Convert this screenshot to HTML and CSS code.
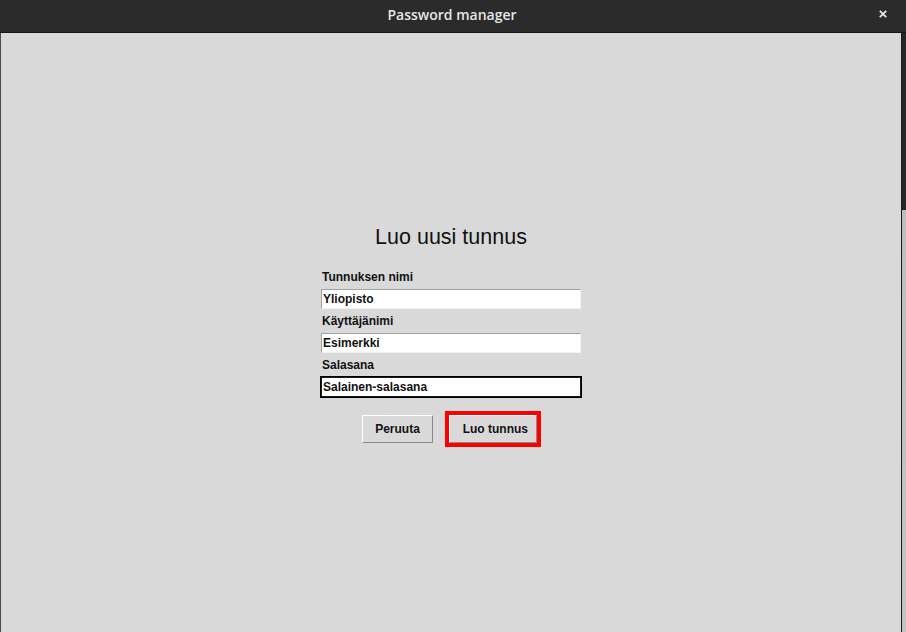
FILE: index.html
```html
<!DOCTYPE html>
<html lang="fi">
<head>
<meta charset="utf-8">
<title>Password manager</title>
<link rel="stylesheet" href="styles.css">
</head>
<body>
<div class="window">
  <header class="titlebar">
    <span class="title">Password manager</span>
    <span class="close" aria-label="Sulje">
      <svg width="8" height="8" viewBox="0 0 8 8"><path d="M0.8 0.8 L7.2 7.2 M7.2 0.8 L0.8 7.2" stroke="#e4e4e4" stroke-width="1.9" fill="none"/></svg>
    </span>
  </header>
  <div class="main">
    <div class="content">
      <div class="form">
        <h1 class="heading">Luo uusi tunnus</h1>
        <label class="label">Tunnuksen nimi</label>
        <div class="entry"><div class="entry-inner">Yliopisto</div></div>
        <label class="label">Käyttäjänimi</label>
        <div class="entry"><div class="entry-inner">Esimerkki</div></div>
        <label class="label">Salasana</label>
        <div class="entry focused"><div class="entry-inner">Salainen-salasana</div></div>
        <div class="buttons">
          <button class="btn">Peruuta</button>
          <div class="focus-ring"><button class="btn btn-wide">Luo tunnus</button></div>
        </div>
      </div>
    </div>
    <div class="edge"></div>
  </div>
</div>
</body>
</html>
```

FILE: styles.css
```css
html, body {
  margin: 0;
  padding: 0;
  width: 906px;
  height: 632px;
  overflow: hidden;
  background: #2a2a2a;
}

.window {
  display: flex;
  flex-direction: column;
  width: 906px;
  height: 632px;
}

.titlebar {
  position: relative;
  flex: none;
  height: 33px;
  box-sizing: border-box;
  background: #2b2b2b;
  border-bottom: 1px solid #161616;
  display: flex;
  align-items: center;
  justify-content: center;
  padding-bottom: 3px;
  padding-right: 2px;
}

.title {
  font-family: "Open Sans", "DejaVu Sans", sans-serif;
  font-weight: 600;
  font-size: 14px;
  color: #e6e6e6;
}

.close {
  position: absolute;
  left: 879px;
  top: 10px;
  width: 8px;
  height: 8px;
  display: block;
}
.close svg { display: block; }

.main {
  flex: 1;
  display: flex;
}

.content {
  flex: 1;
  background: #d9d9d9;
  border-left: 1px solid #4a4a4a;
  display: flex;
  justify-content: center;
  padding-top: 189px;
}

.edge {
  width: 4px;
  border-left: 1px solid #1a1a1a;
  background: linear-gradient(to bottom, #262626 0, #262626 177px, #bdbdbd 177px, #c4c4c4 100%);
}

.form {
  width: 262px;
  display: flex;
  flex-direction: column;
  font-family: "Liberation Sans", Arial, sans-serif;
  font-weight: bold;
  font-size: 12px;
  color: #111;
}

.heading {
  margin: 0 0 14px;
  font-size: 21.5px;
  font-weight: normal;
  line-height: 30px;
  text-align: center;
  color: #111;
}

.label {
  display: block;
  height: 22px;
  line-height: 22px;
  padding-left: 2px;
}

.entry {
  height: 22px;
  box-sizing: border-box;
  border: 1px solid transparent;
}
.entry-inner {
  height: 20px;
  box-sizing: border-box;
  background: #fff;
  border-top: 1px solid #a3a3a3;
  border-left: 1px solid #a3a3a3;
  border-right: 1px solid #f2f2f2;
  border-bottom: 1px solid #f2f2f2;
  line-height: 18px;
  padding-left: 1px;
  white-space: nowrap;
}
.entry.focused {
  border-color: #000;
}
.entry.focused .entry-inner {
  border-color: #1a1a1a;
}

.buttons {
  margin-top: 13px;
  display: flex;
  align-items: center;
  justify-content: center;
  gap: 12px;
  padding-left: 1px;
}

.btn {
  height: 28px;
  padding: 0 12px;
  margin: 0;
  box-sizing: border-box;
  background: #d9d9d9;
  border-top: 1px solid #ffffff;
  border-left: 1px solid #ffffff;
  border-right: 1px solid #8a8a8a;
  border-bottom: 1px solid #8a8a8a;
  font-family: "Liberation Sans", Arial, sans-serif;
  font-weight: bold;
  font-size: 12px;
  color: #111;
  border-radius: 0;
}
.btn-wide {
  width: 88px;
  padding: 0 0 0 5px;
}

.focus-ring {
  border: 4px solid #ff0000;
  display: flex;
}
```
